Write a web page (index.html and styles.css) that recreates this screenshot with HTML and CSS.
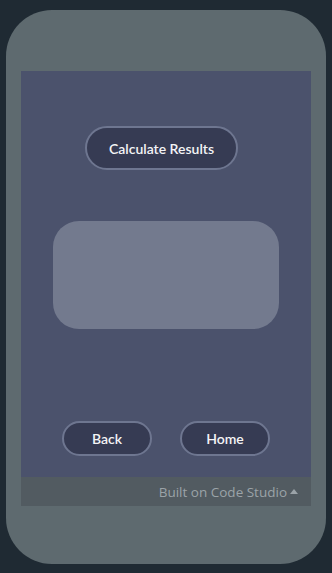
FILE: index.html
```html
<!DOCTYPE html>
<html>
<head>
<meta charset="utf-8">
<link rel="stylesheet" href="styles.css">
</head>
<body>
<div class="phone">
  <div class="screen">
    <div class="app">
      <button class="btn btn-calc">Calculate Results</button>
      <div class="result"></div>
      <div class="nav">
        <button class="btn btn-nav">Back</button>
        <button class="btn btn-nav">Home</button>
      </div>
    </div>
    <div class="footer"><span>Built on Code Studio</span><span class="caret"></span></div>
  </div>
</div>
</body>
</html>
```

FILE: styles.css
```css
html, body {
  margin: 0;
  padding: 0;
  background: #1f2a33;
}
body {
  width: 332px;
  height: 573px;
  overflow: hidden;
}
.phone {
  margin: 10px 6px 0 6px;
  width: 320px;
  height: 554px;
  box-sizing: border-box;
  padding: 61px 15px 0 15px;
  background: #5e6a6f;
  border-radius: 46px;
}
.screen {
  width: 290px;
  display: flex;
  flex-direction: column;
}
.app {
  height: 406px;
  background: #4b526c;
  display: flex;
  flex-direction: column;
  box-sizing: border-box;
  padding-top: 55px;
}
.btn {
  box-sizing: border-box;
  background: #363b53;
  border: 2px solid #6e7690;
  color: #f4f4f6;
  font-family: "Lato", "Open Sans", sans-serif;
  font-size: 14px;
  font-weight: 600;
  padding: 0;
  margin: 0;
}
.btn-calc {
  width: 153px;
  height: 44px;
  border-radius: 22px;
  margin-left: 64px;
}
.result {
  margin: 51px 32px 0 32px;
  height: 108px;
  background: #737a8e;
  border-radius: 26px;
}
.nav {
  margin-top: 92px;
  display: flex;
  justify-content: center;
  gap: 28px;
}
.btn-nav {
  width: 90px;
  height: 35px;
  border-radius: 18px;
}
.footer {
  height: 29px;
  background: #525b61;
  color: #9ba3a8;
  font-family: "Open Sans", "Lato", sans-serif;
  font-size: 13.5px;
  box-sizing: border-box;
  padding-right: 13px;
  display: flex;
  justify-content: flex-end;
  align-items: center;
  gap: 3px;
}
.caret {
  width: 0;
  height: 0;
  border-left: 4px solid transparent;
  border-right: 4px solid transparent;
  border-bottom: 5px solid #9ba3a8;
  margin-top: -1px;
}
```
